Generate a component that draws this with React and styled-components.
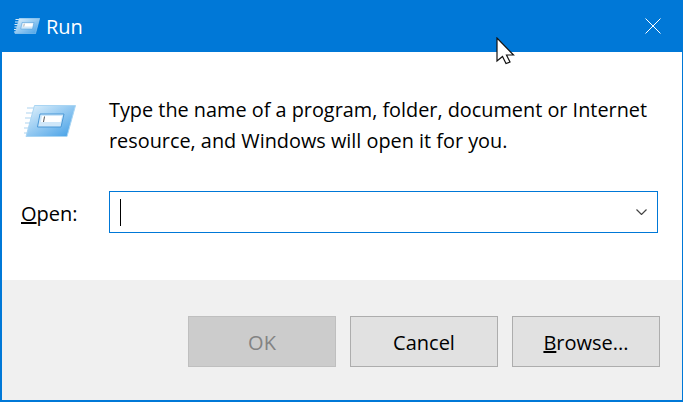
import React from 'react';
import styled, { createGlobalStyle } from 'styled-components';

const GlobalStyle = createGlobalStyle`
  html, body { margin: 0; padding: 0; background: #fff; }
  body { font-family: "Open Sans", "Noto Sans", "Liberation Sans", sans-serif; }
`;

const Window = styled.div`
  position: relative;
  box-sizing: border-box;
  width: 683px;
  height: 402px;
  display: flex;
  flex-direction: column;
  border: solid #0078d7;
  border-width: 0 1px 2px 2px;
  background: #fff;
  overflow: hidden;
`;

const TitleBar = styled.div`
  height: 52px;
  flex: none;
  display: flex;
  align-items: center;
  background: #0078d7;
  color: #fff;
  padding: 0 21px 0 12px;
`;

const Title = styled.span`
  font-size: 20px;
  margin-left: 6px;
  flex: 1;
`;

const Close = styled.button`
  width: 16px;
  height: 16px;
  padding: 0;
  border: 0;
  background: none;
  display: flex;
  align-items: center;
  justify-content: center;
`;

const Body = styled.div`
  flex: 1;
  padding: 42px 24px 0 19px;
`;

const Intro = styled.div`
  display: flex;
  align-items: flex-start;
`;

const IconSlot = styled.div`
  flex: none;
  margin: 11px 33px 0 3px;
  display: flex;
`;

const Message = styled.p`
  margin: 0;
  font-size: 19.85px;
  line-height: 31px;
  color: #000;
  width: 550px;
`;

const OpenRow = styled.div`
  display: flex;
  align-items: center;
  margin-top: 35px;
`;

const OpenLabel = styled.label`
  width: 88px;
  font-size: 20px;
  color: #000;
  padding-top: 3px;
`;

const Combo = styled.div`
  box-sizing: border-box;
  width: 549px;
  height: 42px;
  display: flex;
  align-items: center;
  justify-content: space-between;
  padding: 0 10px 0 10px;
  border: 1px solid #0078d7;
`;

const Caret = styled.span`
  width: 1px;
  height: 27px;
  background: #000;
`;

const Footer = styled.div`
  height: 120px;
  flex: none;
  box-sizing: border-box;
  background: #f0f0f0;
  display: flex;
  justify-content: flex-end;
  gap: 14px;
  padding: 36px 22px 0 0;
`;

const Button = styled.button`
  box-sizing: border-box;
  width: 148px;
  height: 51px;
  padding: 1px 0 0;
  font-family: inherit;
  font-size: 20px;
  color: ${p => (p.disabled ? '#838383' : '#000')};
  background: ${p => (p.disabled ? '#cccccc' : '#e1e1e1')};
  border: 1px solid ${p => (p.disabled ? '#bfbfbf' : '#adadad')};
`;

const Pointer = styled.svg`
  position: absolute;
  left: 493px;
  top: 37px;
`;

const RunIcon = ({ width, height, id }) => (
  <svg width={width} height={height} viewBox="0 0 52 32">
    <defs>
      <linearGradient id={id} x1="0" y1="0" x2="1" y2="1">
        <stop offset="0" stopColor="#e4f3fc" />
        <stop offset="1" stopColor="#3f9de6" />
      </linearGradient>
    </defs>
    <path d="M3 3h9M2 8h9M1 13h8M1 18h7M0 23h6M0 28h5" stroke="#d6e9f7" strokeWidth="2" />
    <path d="M10.500.5H51.500L43 31.500H2Z" fill={`url(#${id})`} stroke="#a9d5f3" strokeWidth="1" />
    <path d="M16 9H40L37 22H13.500Z" fill="#cfe7f9" stroke="#4a98d6" strokeWidth="1" />
    <path d="M18 11H38L36.500 17H17Z" fill="#fff" />
    <path d="M20.500 11.500L19.500 17" stroke="#555" strokeWidth="1" />
  </svg>
);

const App = () => (
  <>
    <GlobalStyle />
    <Window>
      <TitleBar>
        <RunIcon width={26} height={16} id="small" />
        <Title>Run</Title>
        <Close aria-label="Close">
          <svg width="16" height="16" viewBox="0 0 16 16">
            <path d="M.5.5l15 15M15.500.5l-15 15" stroke="#fff" strokeWidth="1" />
          </svg>
        </Close>
      </TitleBar>
      <Body>
        <Intro>
          <IconSlot>
            <RunIcon width={52} height={32} id="large" />
          </IconSlot>
          <Message>
            Type the name of a program, folder, document or Internet resource, and Windows will open it for you.
          </Message>
        </Intro>
        <OpenRow>
          <OpenLabel><u>O</u>pen:</OpenLabel>
          <Combo>
            <Caret />
            <svg width="11" height="6" viewBox="0 0 11 6">
              <path d="M.5.5l5 5 5-5" fill="none" stroke="#444" strokeWidth="1.200" />
            </svg>
          </Combo>
        </OpenRow>
      </Body>
      <Footer>
        <Button disabled>OK</Button>
        <Button>Cancel</Button>
        <Button><u>B</u>rowse...</Button>
      </Footer>
      <Pointer width="24" height="30" viewBox="0 0 24 30">
        <path d="M2 1V24L7.500 19.500L11 26.500L15 25L11.500 18H18.500Z" fill="#fff" stroke="#111" strokeWidth="1.200" />
      </Pointer>
    </Window>
  </>
);

export default App;
